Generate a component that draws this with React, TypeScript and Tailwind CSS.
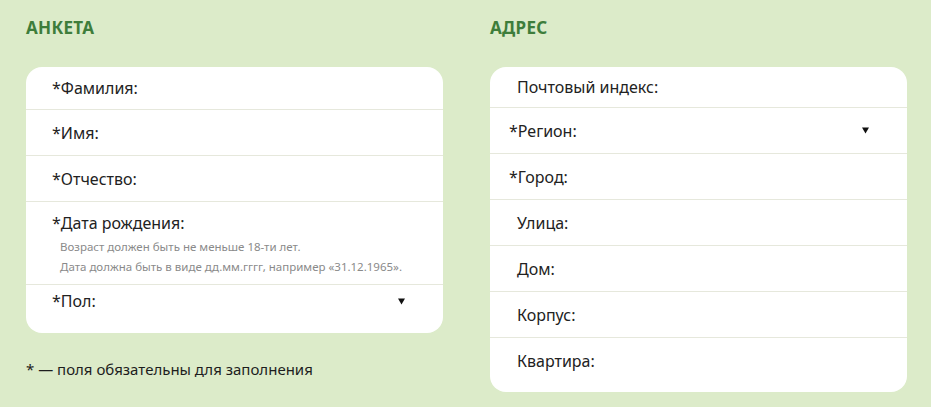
import React from 'react';

const font = { fontFamily: '"Noto Sans", "Open Sans", sans-serif' };

const Arrow = () => (
  <svg width="7" height="7" viewBox="0 0 7 7" className="shrink-0">
    <path d="M0 0.5 H7 L3.5 6.5 Z" fill="#111" />
  </svg>
);

interface RowProps {
  label: string;
  className: string;
  select?: boolean;
  arrowPad?: string;
  children?: React.ReactNode;
}

const Row = ({ label, className, select, arrowPad = 'pr-[38px]', children }: RowProps) => (
  <div className={className}>
    <div className={`flex items-center justify-between ${select ? arrowPad : ''}`}>
      <span className="text-[16px] leading-[20px] text-[#222]">{label}</span>
      {select && <Arrow />}
    </div>
    {children}
  </div>
);

const App = () => {
  return (
    <div className="w-[931px] h-[407px] bg-[#dcebc9] overflow-hidden" style={font}>
      <div className="flex gap-[47px] pl-[26px] pt-[17px]">
        {/* анкета */}
        <div className="w-[417px]">
          <h2 className="text-[17px] leading-[22px] font-bold text-[#3e7d3b] tracking-[0.3px]">АНКЕТА</h2>
          <div className="mt-[28px] bg-white rounded-[16px] overflow-hidden">
            <Row label="*Фамилия:" className="h-[43px] border-b border-[#e6e8dc] pl-[26px] flex flex-col justify-center" />
            <Row label="*Имя:" className="h-[46px] border-b border-[#e6e8dc] pl-[26px] flex flex-col justify-center" />
            <Row label="*Отчество:" className="h-[46px] border-b border-[#e6e8dc] pl-[26px] flex flex-col justify-center" />
            <Row label="*Дата рождения:" className="h-[83px] border-b border-[#e6e8dc] pl-[26px] pt-[11px]">
              <div className="pl-[8px] pt-[4px] text-[11.5px] leading-[20px] text-[#8a8a8a]">
                <div>Возраст должен быть не меньше 18-ти лет.</div>
                <div>Дата должна быть в виде дд.мм.гггг, например «31.12.1965».</div>
              </div>
            </Row>
            <Row label="*Пол:" select className="h-[48px] pl-[26px] pt-[6px]" />
          </div>
          <p className="mt-[26px] text-[15px] leading-[20px] text-[#1d1d1d]">* — поля обязательны для заполнения</p>
        </div>

        {/* адрес */}
        <div className="w-[417px]">
          <h2 className="text-[17px] leading-[22px] font-bold text-[#3e7d3b] tracking-[0.3px]">АДРЕС</h2>
          <div className="mt-[28px] bg-white rounded-[16px] overflow-hidden">
            <Row label="Почтовый индекс:" className="h-[41px] border-b border-[#e6e8dc] pl-[27px] flex flex-col justify-center" />
            <Row label="*Регион:" select className="h-[46px] border-b border-[#e6e8dc] pl-[19px] flex flex-col justify-center" />
            <Row label="*Город:" className="h-[46px] border-b border-[#e6e8dc] pl-[19px] flex flex-col justify-center" />
            <Row label="Улица:" className="h-[46px] border-b border-[#e6e8dc] pl-[27px] flex flex-col justify-center" />
            <Row label="Дом:" className="h-[46px] border-b border-[#e6e8dc] pl-[27px] flex flex-col justify-center" />
            <Row label="Корпус:" className="h-[46px] border-b border-[#e6e8dc] pl-[27px] flex flex-col justify-center" />
            <Row label="Квартира:" className="h-[54px] pl-[27px] pt-[13px]" />
          </div>
        </div>
      </div>
    </div>
  );
};

export default App;
